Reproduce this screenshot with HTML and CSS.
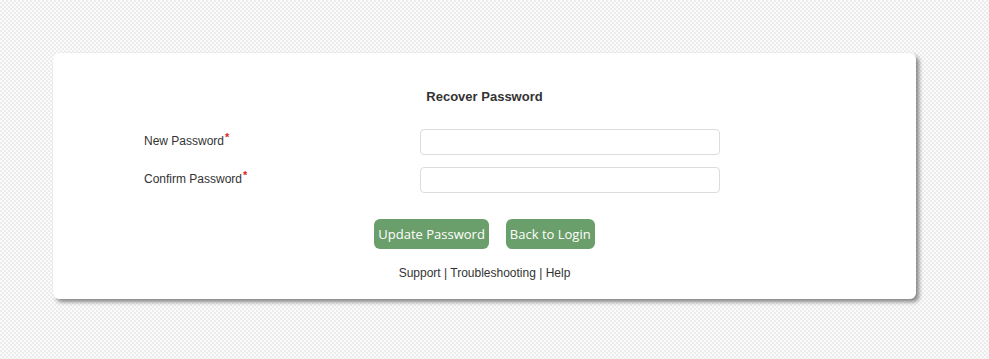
FILE: index.html
```html
<!DOCTYPE html>
<html lang="en">
<head>
    <meta charset="UTF-8">
    <meta name="viewport" content="width=device-width, initial-scale=1.0">
    <title>Recover Password</title>
    <link rel="stylesheet" href="styles.css">
</head>
<body>
    <div class="card">
        <h2 class="card-title">Recover Password</h2>

        <form class="form-grid" onsubmit="return false">
            <label for="newPassword">New Password<span class="req">*</span></label>
            <input type="password" id="newPassword">

            <label for="confirmPassword">Confirm Password<span class="req">*</span></label>
            <input type="password" id="confirmPassword">
        </form>

        <div class="actions">
            <button class="btn" type="button">Update Password</button>
            <button class="btn" type="button">Back to Login</button>
        </div>

        <div class="links">
            <a href="#">Support</a> | <a href="#">Troubleshooting</a> | <a href="#">Help</a>
        </div>
    </div>
</body>
</html>
```

FILE: styles.css
```css
* {
    margin: 0;
    padding: 0;
    box-sizing: border-box;
}

body {
    font-family: 'Liberation Sans', Arial, sans-serif;
    color: #333;
    min-height: 100vh;
    background-color: #fbfbfb;
    background-image: repeating-conic-gradient(#ececec 0% 25%, #fbfbfb 0% 50%);
    background-size: 4px 4px;
    padding: 53px 0 0 53px;
}

.card {
    width: 863px;
    background: #fff;
    border-radius: 6px;
    box-shadow: 3px 3px 4px rgba(0, 0, 0, 0.45);
    padding: 36px 0 18px;
}

.card-title {
    font-size: 13px;
    font-weight: bold;
    line-height: 16px;
    text-align: center;
    margin-bottom: 24px;
}

.form-grid {
    display: grid;
    grid-template-columns: 276px 300px;
    row-gap: 12px;
    align-items: center;
    margin-left: 91px;
}

.form-grid label {
    font-size: 12px;
    line-height: 16px;
    margin-top: -2px;
}

.req {
    color: #e32222;
    font-size: 11px;
    font-weight: bold;
    line-height: 0;
    vertical-align: 4px;
    margin-left: 1px;
}

.form-grid input {
    height: 26px;
    border: 1px solid #dcdcdc;
    border-radius: 4px;
    background: #fff;
    outline: none;
    padding: 0 6px;
}

.actions {
    display: flex;
    justify-content: center;
    gap: 17px;
    margin-top: 26px;
}

.btn {
    height: 30px;
    padding: 0 4px;
    border: none;
    border-radius: 6px;
    background: #6a9e6a;
    color: #fff;
    font-family: 'Open Sans', 'DejaVu Sans', sans-serif;
    font-size: 13px;
    cursor: pointer;
}

.links {
    margin-top: 17px;
    text-align: center;
    font-size: 12px;
    line-height: 15px;
}

.links a {
    color: #333;
    text-decoration: none;
}
```
